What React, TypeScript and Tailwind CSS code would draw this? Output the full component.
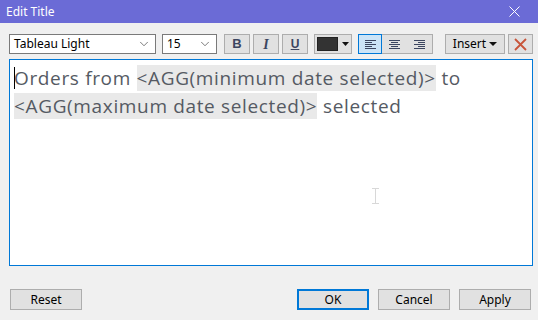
import { ChevronDown } from "lucide-react";

function Btn({ label, primary }: { label: string; primary?: boolean }) {
  return (
    <button
      className={`h-[21px] w-[72px] bg-[#e1e1e1] text-[12px] text-black ${
        primary ? "border-2 border-[#0078d7]" : "border border-[#adadad]"
      }`}
    >
      {label}
    </button>
  );
}

function AlignIcon({ kind }: { kind: "left" | "center" | "right" }) {
  const widths = [11, 7, 11, 7, 11];
  return (
    <svg width="11" height="9" viewBox="0 0 11 9">
      {widths.map((w, i) => {
        const x = kind === "left" ? 0 : kind === "right" ? 11 - w : (11 - w) / 2;
        return <rect key={i} x={x} y={i * 2} width={w} height="1" fill="#3c4660" />;
      })}
    </svg>
  );
}

export default function App() {
  return (
    <div className="w-[538px] h-[320px] bg-[#f0f0f0] flex flex-col font-['Noto_Sans',sans-serif] overflow-hidden">
      {/* title bar */}
      <div className="h-[23px] bg-[#6b6bd6] flex items-center justify-between pl-[6px] pr-[18px]">
        <span className="text-white text-[12px]">Edit Title</span>
        <svg width="11" height="11" viewBox="0 0 11 11">
          <path d="M0.5 0.5 L10.5 10.5 M10.5 0.5 L0.5 10.5" stroke="#fff" strokeWidth="1" />
        </svg>
      </div>

      {/* toolbar */}
      <div className="flex items-center mt-[11px] pl-[9px] h-[20px]">
        <div className="w-[147px] h-[20px] bg-white border border-[#7a7a7a] flex items-center justify-between px-[4px] text-[12px] text-black">
          <span>Tableau Light</span>
          <ChevronDown size={14} strokeWidth={1.2} color="#444" />
        </div>
        <div className="ml-[6px] w-[55px] h-[20px] bg-white border border-[#7a7a7a] flex items-center justify-between px-[4px] text-[12px] text-black">
          <span>15</span>
          <ChevronDown size={14} strokeWidth={1.2} color="#444" />
        </div>
        <div className="ml-[7px] w-[26px] h-[20px] bg-[#e1e1e1] border border-[#adadad] flex items-center justify-center text-[13px] font-bold text-[#3c4660] font-['Liberation_Sans',sans-serif]">
          B
        </div>
        <div className="ml-[3px] w-[26px] h-[20px] bg-[#e1e1e1] border border-[#adadad] flex items-center justify-center text-[14px] font-bold italic text-[#3c4660] font-['Liberation_Serif',serif]">
          I
        </div>
        <div className="ml-[3px] w-[26px] h-[20px] bg-[#e1e1e1] border border-[#adadad] flex items-center justify-center text-[12px] font-bold underline text-[#3c4660] font-['Liberation_Sans',sans-serif]">
          U
        </div>
        <div className="ml-[6px] w-[38px] h-[20px] bg-[#e1e1e1] border border-[#adadad] flex items-center pl-[2px] gap-[4px]">
          <div className="w-[21px] h-[14px] bg-[#333] border border-[#222]" />
          <svg width="7" height="4" viewBox="0 0 7 4">
            <path d="M0 0 L7 0 L3.5 4 Z" fill="#111" />
          </svg>
        </div>
        <div className="ml-[6px] flex h-[20px] border border-[#adadad] bg-[#e1e1e1]">
          <div className="w-[24px] h-[20px] bg-[#cce4f7] border border-[#0078d7] -ml-px -mt-px flex items-center justify-center">
            <AlignIcon kind="left" />
          </div>
          <div className="w-[25px] h-full flex items-center justify-center">
            <AlignIcon kind="center" />
          </div>
          <div className="w-[25px] h-full flex items-center justify-center">
            <AlignIcon kind="right" />
          </div>
        </div>
        <div className="ml-[12px] w-[60px] h-[20px] bg-[#e1e1e1] border border-[#adadad] flex items-center justify-center gap-[3px] text-[12px] text-black">
          <span>Insert</span>
          <svg width="8" height="4" viewBox="0 0 8 4">
            <path d="M0 0 L8 0 L4 4 Z" fill="#111" />
          </svg>
        </div>
        <div className="ml-[3px] w-[25px] h-[20px] bg-[#e1e1e1] border border-[#adadad] flex items-center justify-center">
          <svg width="13" height="13" viewBox="0 0 13 13">
            <path d="M1 1 L12 12 M12 1 L1 12" stroke="#c8553a" strokeWidth="1.8" />
          </svg>
        </div>
      </div>

      {/* text area */}
      <div className="relative mt-[5px] ml-[9px] w-[524px] h-[207px] bg-white border border-[#0078d7] px-[4px] pt-[4px] font-['Open_Sans',sans-serif] text-[19px] leading-[28px] tracking-[0.65px] text-[#555a63]">
        <div className="relative">
          <span className="absolute left-0 top-[3px] w-px h-[22px] bg-black" />
          <span>Orders from </span>
          <span className="bg-[#e9e9e9]">&lt;AGG(minimum date selected)&gt;</span>
          <span> to</span>
          <br />
          <span className="bg-[#e9e9e9]">&lt;AGG(maximum date selected)&gt;</span>
          <span> selected</span>
        </div>
        <svg className="absolute left-[362px] top-[128px]" width="7" height="16" viewBox="0 0 7 16">
          <path d="M0 0.5 H7 M3.5 0.5 V15.5 M0 15.5 H7" stroke="#d8d8d8" strokeWidth="1" />
        </svg>
      </div>

      {/* buttons */}
      <div className="flex items-center mt-[23px] pl-[10px] pr-[7px]">
        <Btn label="Reset" />
        <div className="flex-1" />
        <div className="flex gap-[9px]">
          <Btn label="OK" primary />
          <Btn label="Cancel" />
          <Btn label="Apply" />
        </div>
      </div>
    </div>
  );
}
